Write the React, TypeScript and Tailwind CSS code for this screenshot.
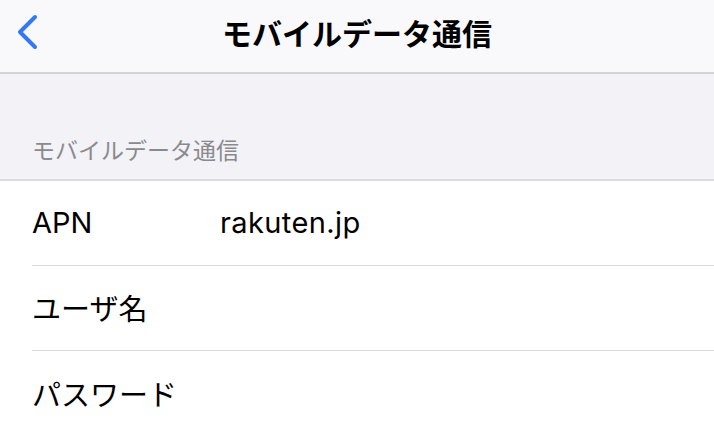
const jp = { fontFamily: '"Noto Sans CJK JP", "Noto Sans", sans-serif' };
const latin = { fontFamily: 'Inter, "Noto Sans CJK JP", sans-serif' };

function Row({ label, value, last }: { label: string; value?: string; last?: boolean }) {
  const isLatin = /^[A-Za-z]/.test(label);
  return (
    <div className="pl-8">
      <div className={`flex h-[85px] items-center ${last ? '' : 'border-b border-[#d9d9dc]'}`}>
        <span className="w-[188px] shrink-0 text-[29px] text-black" style={isLatin ? latin : undefined}>
          {label}
        </span>
        {value && (
          <span className="text-[29px] tracking-[0.4px] text-black" style={latin}>
            {value}
          </span>
        )}
      </div>
    </div>
  );
}

export default function App() {
  return (
    <div className="h-[432px] w-[714px] overflow-hidden bg-[#f2f2f7]" style={jp}>
      <div className="relative flex h-[74px] items-center justify-center border-b-2 border-[#d4d4d8] bg-[#f9f9fb]">
        <svg className="absolute left-[14px] top-[13px]" width="26" height="38" viewBox="0 0 26 38" fill="none">
          <path d="M21 4 L6 19 L21 34" stroke="#3478f6" strokeWidth="4" strokeLinecap="round" strokeLinejoin="round" />
        </svg>
        <h1 className="-mt-2 text-[30px] font-bold text-black">モバイルデータ通信</h1>
      </div>
      <div className="flex h-[105px] items-end pb-[13px] pl-8">
        <span className="text-[23px] text-[#8a8a8e]">モバイルデータ通信</span>
      </div>
      <div className="border-t-2 border-[#dcdce0] bg-white">
        <Row label="APN" value="rakuten.jp" />
        <Row label="ユーザ名" />
        <Row label="パスワード" last />
      </div>
    </div>
  );
}
